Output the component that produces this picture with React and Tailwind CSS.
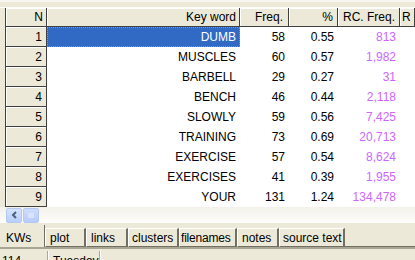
import React from 'react';

const rows = [
  ['1', 'DUMB', '58', '0.55', '813'],
  ['2', 'MUSCLES', '60', '0.57', '1,982'],
  ['3', 'BARBELL', '29', '0.27', '31'],
  ['4', 'BENCH', '46', '0.44', '2,118'],
  ['5', 'SLOWLY', '59', '0.56', '7,425'],
  ['6', 'TRAINING', '73', '0.69', '20,713'],
  ['7', 'EXERCISE', '57', '0.54', '8,624'],
  ['8', 'EXERCISES', '41', '0.39', '1,955'],
  ['9', 'YOUR', '131', '1.24', '134,478'],
];

const tabs = [
  ['plot', 'w-[41px] pl-[4px]'],
  ['links', 'w-[42px] pl-[4px]'],
  ['clusters', 'w-[51px] pl-[3px]'],
  ['filenames', 'w-[58px] pl-[1px] tracking-[-0.2px]'],
  ['notes', 'w-[42px] pl-[4px]'],
  ['source text', 'w-[66px] pl-[3px]'],
];

const fixedCell =
  'bg-[#ece9d8] border-r border-b border-[#404040] shadow-[inset_1px_1px_0_#ffffff] flex items-center justify-end pr-[3px] text-black';

function App() {
  return (
    <div className="w-[415px] h-[260px] overflow-hidden bg-[#ece9d8] text-[12px] leading-none font-['Liberation_Sans',Arial,sans-serif] flex flex-col">
      {/* top strip */}
      <div className="h-[8px] border-t-[2px] border-t-[#f7f6f0] border-b border-b-[#fdfcf8] shrink-0" />

      {/* grid */}
      <div className="ml-[5px] border-l border-[#404040] flex flex-col shrink-0">
        <div className="flex h-[19px]">
          <div className={`${fixedCell} w-[41px]`}>N</div>
          <div className={`${fixedCell} w-[193px]`}>Key word</div>
          <div className={`${fixedCell} w-[49px] pr-[5px]`}>Freq.</div>
          <div className={`${fixedCell} w-[49px] pr-[4px]`}>%</div>
          <div className={`${fixedCell} w-[62px] pr-[4px]`}>RC. Freq.</div>
          <div className={`${fixedCell} flex-1 justify-start pl-[2px]`}>R</div>
        </div>
        {rows.map(([n, word, freq, pct, rc]) => (
          <div key={n} className="flex h-[20px] bg-white">
            <div className={`${fixedCell} w-[41px] pr-[4px]`}>{n}</div>
            <div
              className={`w-[193px] flex items-center justify-end pr-[4px] ${
                n === '1'
                  ? 'bg-[#316ac5] text-white outline outline-1 outline-dotted outline-[#e08c00] -outline-offset-1'
                  : 'text-black'
              }`}
            >
              {word}
            </div>
            <div className="w-[49px] flex items-center justify-end pr-[4px]">{freq}</div>
            <div className="w-[49px] flex items-center justify-end pr-[4px]">{pct}</div>
            <div className="w-[62px] flex items-center justify-end pr-[4px] text-[#cc66ff]">{rc}</div>
            <div className="flex-1" />
          </div>
        ))}
      </div>

      {/* horizontal scrollbar */}
      <div className="h-[16px] shrink-0 flex items-center pl-[6px] bg-gradient-to-b from-[#f3f1ea] to-[#fdfdfb]">
        <div className="w-[16px] h-[15px] rounded-[2px] border border-[#b4c8f6] bg-gradient-to-b from-[#d6e3fe] to-[#b9cefc] flex items-center justify-center">
          <svg width="7" height="8" viewBox="0 0 7 8">
            <path d="M5 1 L2 4 L5 7" stroke="#4d6185" strokeWidth="2" fill="none" />
          </svg>
        </div>
        <div className="w-[16px] h-[15px] ml-[1px] rounded-[2px] border border-[#b4c8f6] bg-gradient-to-b from-[#cfdcfd] to-[#b7cbfa] flex items-center justify-center">
          <svg width="7" height="7" viewBox="0 0 7 7">
            <path d="M1 1 V6 M3 1 V6 M5 1 V6" stroke="#eef3ff" strokeWidth="1" />
          </svg>
        </div>
      </div>

      {/* tabs */}
      <div className="h-[24px] shrink-0 flex items-end">
        <div className="w-[45px] h-[22px] flex items-end justify-start pl-[6px] pb-[3px] border-r border-[#716f64] text-black">
          KWs
        </div>
        {tabs.map(([label, w]) => (
          <div
            key={label}
            className={`${w} h-[19px] flex items-center whitespace-nowrap overflow-hidden border-t border-l border-white border-r-2 border-r-[#716f64] border-b border-b-[#716f64] text-black`}
          >
            {label}
          </div>
        ))}
        <div className="flex-1 h-[19px] border-b border-[#716f64]" />
      </div>
      <div className="h-[2px] shrink-0 bg-[#a8a593]" />

      {/* status bar */}
      <div className="flex-1 flex pt-[2px]">
        <div className="w-[48px] border-r border-[#aca899] pl-[2px] pt-[4px]">114</div>
        <div className="w-[52px] border-l border-white border-r border-r-[#aca899] pl-[4px] pt-[4px]">Tuesday</div>
        <div className="flex-1 border-l border-white" />
      </div>
    </div>
  );
}

export default App;
